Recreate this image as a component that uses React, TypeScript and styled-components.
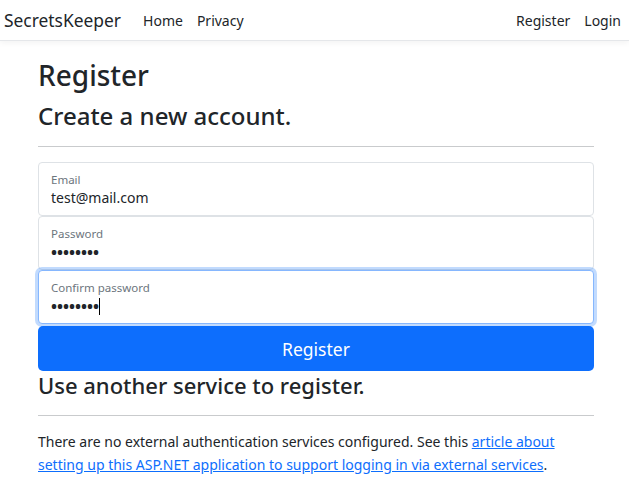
import styled, { createGlobalStyle } from 'styled-components';

const GlobalStyle = createGlobalStyle`
    html, body {
        margin: 0;
        padding: 0;
        background: #fff;
    }
    body {
        font-family: 'Noto Sans', 'Open Sans', sans-serif;
        color: #212529;
        font-size: 14px;
    }
`;

const NavBar = styled.nav`
    display: flex;
    align-items: center;
    height: 40px;
    padding: 0 8px 0 4px;
    border-bottom: 1px solid #e5e7ea;
    box-shadow: 0 2px 6px rgba(0, 0, 0, 0.05);
`;

const Brand = styled.a`
    font-size: 17.4px;
    color: #212529;
    text-decoration: none;
    margin-right: 22px;
`;

const NavList = styled.div<{ right?: boolean }>`
    display: flex;
    gap: 14px;
    margin-left: ${({ right }) => (right ? 'auto' : '0')};
`;

const NavLink = styled.a`
    font-size: 14px;
    color: #212529;
    text-decoration: none;
`;

const Main = styled.main`
    padding: 0 35px 0 38px;
`;

const Title = styled.h1`
    font-size: 28px;
    font-weight: 500;
    margin: 17px 0 0;
    line-height: 34px;
`;

const SubTitle = styled.h2`
    font-size: 24px;
    font-weight: 500;
    margin: 10px 0 0;
    line-height: 28px;
`;

const Rule = styled.hr<{ tight?: boolean }>`
    border: 0;
    border-top: 1px solid #c9cbcd;
    margin: 16px 0 ${({ tight }) => (tight ? '14px' : '15px')};
`;

const Field = styled.div<{ focused?: boolean }>`
    position: relative;
    height: 54px;
    box-sizing: border-box;
    border: 1px solid ${({ focused }) => (focused ? '#86b7fe' : '#dee2e6')};
    border-radius: 4px;
    padding: 9px 12px 0;
    background: #fff;
    box-shadow: ${({ focused }) => (focused ? '0 0 0 3px rgba(13, 110, 253, 0.25)' : 'none')};
    z-index: ${({ focused }) => (focused ? 1 : 0)};
`;

const Label = styled.div`
    font-size: 11.5px;
    color: #6c757d;
    line-height: 16px;
`;

const Value = styled.div`
    font-size: 14px;
    line-height: 20px;
    display: flex;
    align-items: center;
`;

const Dots = styled.span`
    font-size: 16px;
    letter-spacing: 0;
    font-weight: 700;
`;

const Caret = styled.span`
    display: inline-block;
    width: 1px;
    height: 17px;
    background: #000;
`;

const SubmitButton = styled.button`
    display: block;
    width: 100%;
    height: 45px;
    margin-top: 2px;
    border: 0;
    border-radius: 5px;
    background: #0d6efd;
    color: #fff;
    font-family: inherit;
    font-size: 17.5px;
    cursor: pointer;
`;

const SectionTitle = styled.h3`
    font-size: 22px;
    font-weight: 500;
    margin: 0;
    line-height: 28px;
`;

const Paragraph = styled.p`
    font-size: 14px;
    line-height: 23px;
    margin: 0;
`;

const Link = styled.a`
    color: #0d6efd;
    text-decoration: underline;
`;

export default function App() {
    return (
        <>
            <GlobalStyle />
            <NavBar>
                <Brand href="#">SecretsKeeper</Brand>
                <NavList>
                    <NavLink href="#">Home</NavLink>
                    <NavLink href="#">Privacy</NavLink>
                </NavList>
                <NavList right>
                    <NavLink href="#">Register</NavLink>
                    <NavLink href="#">Login</NavLink>
                </NavList>
            </NavBar>
            <Main>
                <Title>Register</Title>
                <SubTitle>Create a new account.</SubTitle>
                <Rule />
                <Field>
                    <Label>Email</Label>
                    <Value>test@mail.com</Value>
                </Field>
                <Field>
                    <Label>Password</Label>
                    <Value>
                        <Dots>••••••••</Dots>
                    </Value>
                </Field>
                <Field focused>
                    <Label>Confirm password</Label>
                    <Value>
                        <Dots>••••••••</Dots>
                        <Caret />
                    </Value>
                </Field>
                <SubmitButton>Register</SubmitButton>
                <SectionTitle>Use another service to register.</SectionTitle>
                <Rule tight />
                <Paragraph>
                    There are no external authentication services configured. See this{' '}
                    <Link href="#">
                        article about setting up this ASP.NET application to support logging in via external
                        services
                    </Link>
                    .
                </Paragraph>
            </Main>
        </>
    );
}
